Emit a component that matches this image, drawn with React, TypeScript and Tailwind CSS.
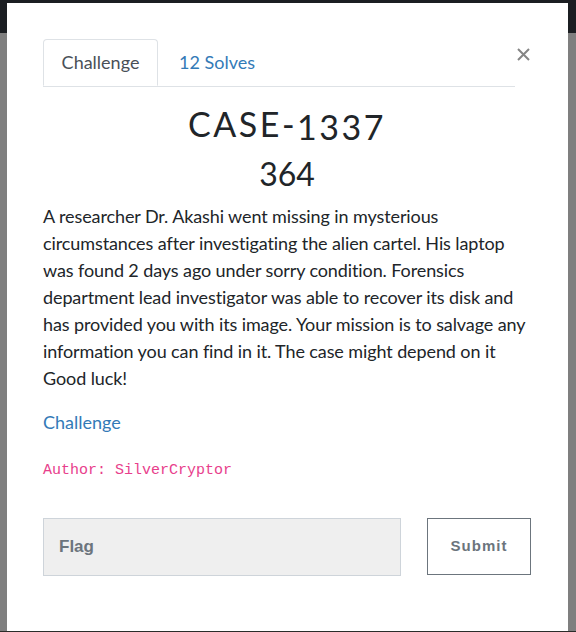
import React from "react";

export default function App() {
  return (
    <div className="relative w-[576px] h-[632px] overflow-hidden bg-[#7f7f7f] font-['Lato',sans-serif]">
      <div className="h-[33px] bg-[#1b1e22]" />
      <div className="absolute left-0 right-0 bottom-0 h-[1px] bg-[#2a2c2a]" />
      <div className="absolute left-[7px] top-[3px] w-[561px] h-[628px] bg-white px-[36px] pt-[36px]">
        <button className="absolute left-[501px] top-[39px] w-[30px] h-[25px] flex items-center justify-center">
          <svg width="13" height="13" viewBox="0 0 13 13">
            <path d="M1 1 L12 12 M12 1 L1 12" stroke="#858585" strokeWidth="2" />
          </svg>
        </button>
        <div className="flex w-[472px] border-b border-[#dee2e6]">
          <div className="w-[115px] h-[47px] -mb-[1px] bg-white border border-[#dee2e6] border-b-white rounded-t-[4px] flex items-center justify-center text-[18px] text-[#495057]">
            Challenge
          </div>
          <div className="h-[47px] flex items-center pl-[21px] text-[18px] text-[#337ab7]">
            12 Solves
          </div>
        </div>
        <div className="w-[488px]">
          <h3 className="text-center text-[34px] leading-[40px] tracking-[2.5px] text-[#212529] mt-[17px]">
            CASE-<span className="relative top-[3px]">1337</span>
          </h3>
          <h4 className="text-center text-[32px] leading-[40px] text-[#212529] mt-[10px]">364</h4>
          <p className="mt-[9px] text-[18px] leading-[27px] tracking-[-0.1px] text-[#212529]">
            A researcher Dr. Akashi went missing in mysterious circumstances after investigating the alien cartel. His laptop was found 2 days ago under sorry condition. Forensics department lead investigator was able to recover its disk and has provided you with its image. Your mission is to salvage any information you can find in it. The case might depend on it Good luck!
          </p>
          <div className="mt-[17px] text-[18px] leading-[27px] text-[#337ab7]">Challenge</div>
          <div className="mt-[25px] font-['Liberation_Mono',monospace] text-[15px] leading-[20px] text-[#e83e8c]">
            Author: SilverCryptor
          </div>
          <div className="mt-[37px] flex justify-between items-start">
            <div className="w-[358px] h-[58px] bg-[#efefef] border border-[#ced4da] flex items-center pl-[15px] font-['Liberation_Sans',sans-serif] font-bold text-[17px] text-[#6c757d]">
              Flag
            </div>
            <div className="w-[104px] h-[57px] border border-[#6c757d] flex items-center justify-center font-['Liberation_Sans',sans-serif] font-bold text-[15px] tracking-[1px] text-[#6c757d]">
              Submit
            </div>
          </div>
        </div>
      </div>
    </div>
  );
}
